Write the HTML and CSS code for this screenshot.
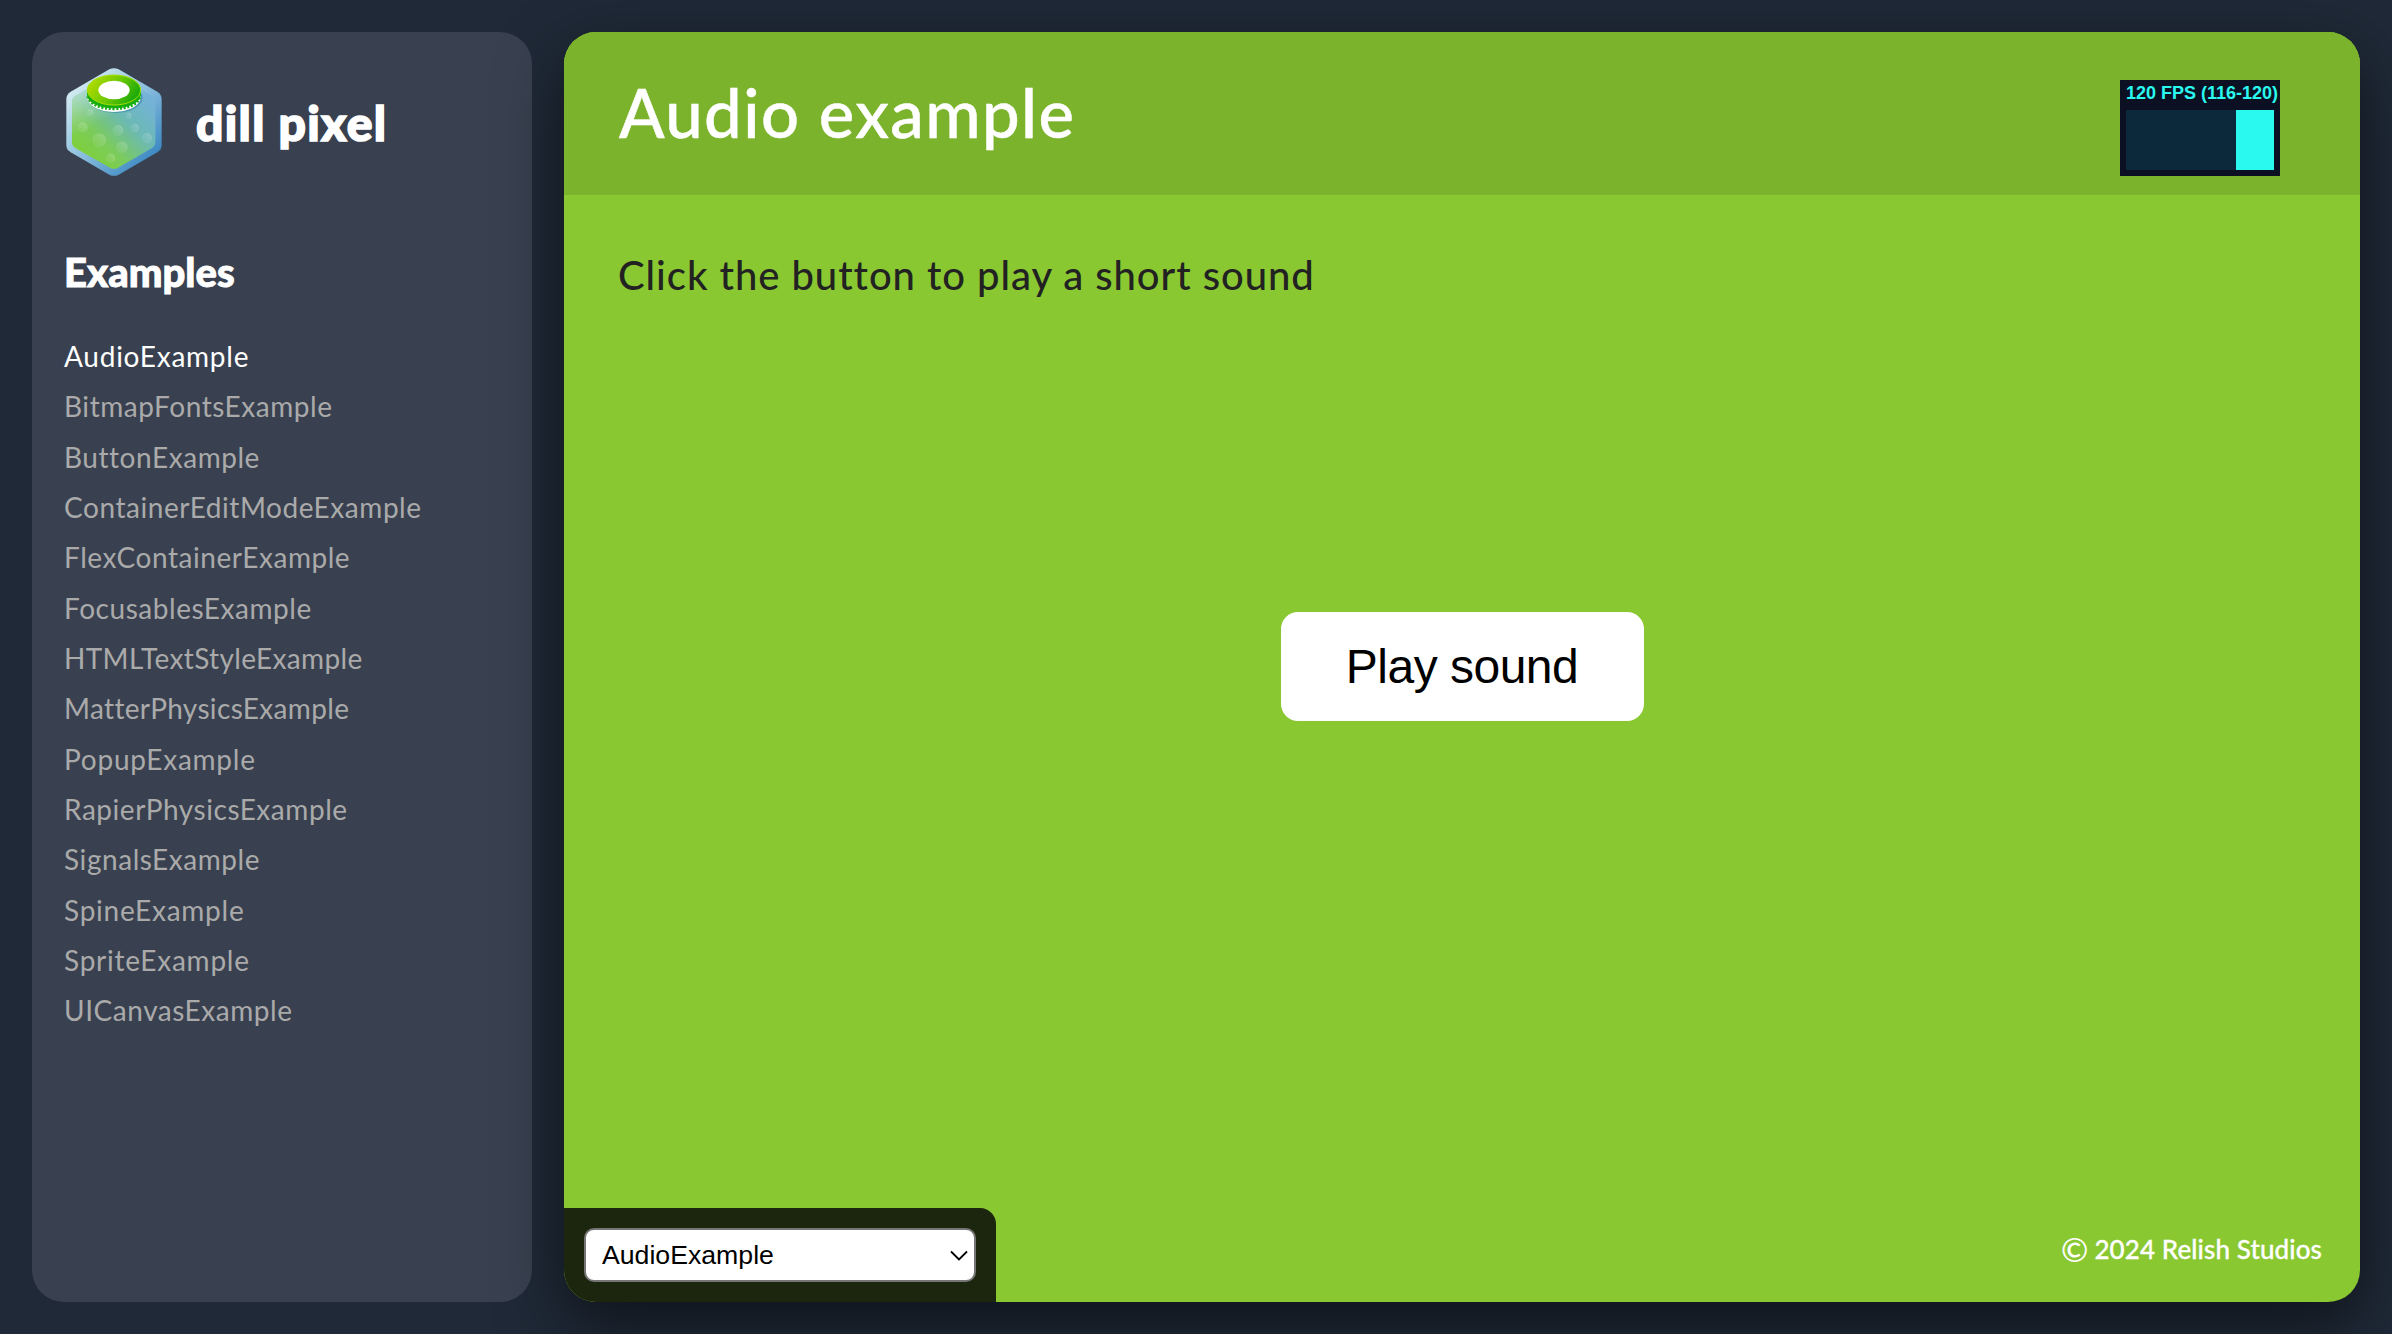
FILE: index.html
```html
<!DOCTYPE html>
<html lang="en">
<head>
<meta charset="utf-8">
<title>dill pixel</title>
<link rel="stylesheet" href="styles.css">
</head>
<body>
<aside class="sidebar">
  <div class="brand">
    <svg class="logo" viewBox="48 39 288 324" aria-hidden="true">
      <defs>
        <linearGradient id="glass" x1="0.1" y1="0.1" x2="0.85" y2="0.9"><stop offset="0" stop-color="#d8eef2"/><stop offset=".5" stop-color="#8dc0de"/><stop offset="1" stop-color="#3b88c3"/></linearGradient>
        <linearGradient id="brine" x1="0.15" y1="0.9" x2="0.8" y2="0.15"><stop offset="0" stop-color="#7fd037"/><stop offset=".3" stop-color="#7bcb5c"/><stop offset=".65" stop-color="#6cb9b4"/><stop offset="1" stop-color="#74b2d8"/></linearGradient>
        <linearGradient id="haze" x1="0.1" y1="0" x2="0.35" y2="0.5"><stop offset="0" stop-color="#d8eef2" stop-opacity=".9"/><stop offset="1" stop-color="#b7dfe0" stop-opacity="0"/></linearGradient>
        <linearGradient id="lid" x1="0" y1="0.3" x2="1" y2="0.7"><stop offset="0" stop-color="#b4dc00"/><stop offset=".5" stop-color="#6cc800"/><stop offset="1" stop-color="#0fa50c"/></linearGradient>
        <linearGradient id="bubble" x1="0" y1="1" x2="1" y2="0"><stop offset="0" stop-color="#fff" stop-opacity=".02"/><stop offset="1" stop-color="#fff" stop-opacity=".2"/></linearGradient>
      </defs>
      <path fill="url(#glass)" d="M178 43Q192 36 206 43L322 110Q335 118 335 132V270Q335 284 322 292L206 359Q192 366 178 359L62 292Q49 284 49 270V132Q49 118 62 110Z"/>
      <path fill="url(#brine)" d="M180 64Q192 57 204 64L305 122Q316 129 316 141V261Q316 273 305 280L204 338Q192 345 180 338L77 280Q66 273 66 261V141Q66 129 77 122Z"/>
      <path fill="url(#haze)" d="M180 64Q192 57 204 64L305 122Q316 129 316 141V261Q316 273 305 280L204 338Q192 345 180 338L77 280Q66 273 66 261V141Q66 129 77 122Z"/>
      <g fill="url(#bubble)" stroke="#fff" stroke-opacity=".12" stroke-width="2">
        <circle cx="121" cy="172" r="9"/><circle cx="236" cy="182" r="8"/><circle cx="98" cy="217" r="14"/><circle cx="204" cy="226" r="15"/><circle cx="255" cy="219" r="11"/><circle cx="148" cy="255" r="19"/><circle cx="291" cy="249" r="14"/><circle cx="216" cy="276" r="16"/><circle cx="182" cy="309" r="13"/>
      </g>
      <ellipse cx="196" cy="128" rx="82" ry="46" fill="#1c6f96" opacity=".4"/>
      <path fill="#fff" d="M111 106V124C111 151 147 171 192 171S273 151 273 124V106Z"/>
      <path fill="#18ad10" d="M111 106V118C111 143 147 160 192 160S273 143 273 118V106Z"/>
      <path fill="none" stroke="#18ad10" stroke-width="9" stroke-dasharray="6 5" d="M114 124C118 147 150 161 192 161S266 147 270 124"/>
      <ellipse cx="192" cy="105" rx="80" ry="45" fill="url(#lid)" stroke="#a5e000" stroke-width="3"/>
      <ellipse cx="192" cy="105" rx="47" ry="28" fill="#fff"/>
    </svg>
    <span class="brand-name">dill pixel</span>
  </div>
  <h2 class="nav-title">Examples</h2>
  <nav class="nav">
    <a class="active">AudioExample</a>
    <a>BitmapFontsExample</a>
    <a>ButtonExample</a>
    <a>ContainerEditModeExample</a>
    <a>FlexContainerExample</a>
    <a>FocusablesExample</a>
    <a class="tight">HTMLTextStyleExample</a>
    <a class="tight">MatterPhysicsExample</a>
    <a class="loose">PopupExample</a>
    <a>RapierPhysicsExample</a>
    <a>SignalsExample</a>
    <a class="loose">SpineExample</a>
    <a class="loose">SpriteExample</a>
    <a>UICanvasExample</a>
  </nav>
</aside>
<main class="stage">
  <header class="stage-header">
    <h1>Audio example</h1>
    <div class="fps"><span class="fps-text">120 FPS (116-120)</span><div class="fps-graph"><div class="fps-bar"></div></div></div>
  </header>
  <p class="intro">Click the button to play a short sound</p>
  <button class="play">Play sound</button>
  <footer class="stage-footer">
    <div class="picker">
      <div class="select"><span>AudioExample</span>
        <svg class="chevron" viewBox="0 0 18 11" aria-hidden="true"><path d="M1 1.5L9 9.5L17 1.5" fill="none" stroke="#000" stroke-width="1.8"/></svg>
      </div>
    </div>
    <div class="copyright"><span class="mark">©</span><span>2024 Relish Studios</span></div>
  </footer>
</main>
</body>
</html>
```

FILE: styles.css
```css
* { box-sizing: border-box; }
body {
  margin: 0;
  width: 2392px;
  height: 1334px;
  padding: 32px;
  display: flex;
  gap: 32px;
  overflow: hidden;
  background: #1f2937;
  color: #fff;
  font-family: Lato, "Liberation Sans", sans-serif;
}
.sidebar {
  width: 500px;
  padding: 36px 32px;
  border-radius: 32px;
  background: #394150;
}
.brand { display: flex; align-items: center; height: 108px; padding-left: 2px; }
.logo { width: 96px; height: 108px; margin-right: 34px; }
.brand-name {
  padding-top: 2px;
  font-size: 48px;
  font-weight: 900;
  line-height: 58px;
  letter-spacing: 1.35px;
  -webkit-text-stroke: 1.6px #fff;
}
.nav-title { margin: 72px 0 0; font-size: 40px; font-weight: 900; line-height: 48px; -webkit-text-stroke: 0.9px #fff; }
.nav { display: flex; flex-direction: column; align-items: flex-start; margin-top: 35px; }
.nav a { color: #aaa; font-size: 28px; line-height: 50.35px; letter-spacing: 0.55px; white-space: nowrap; }
.nav .active { color: #fff; letter-spacing: 0.75px; }
.nav .tight { letter-spacing: 0.35px; }
.nav .loose { letter-spacing: 0.75px; }
.stage {
  flex: 1;
  display: flex;
  flex-direction: column;
  overflow: hidden;
  border-radius: 32px;
  background: #8ac832;
  box-shadow: 0 24px 64px rgba(0, 0, 0, .52);
}
.stage-header {
  display: flex;
  justify-content: space-between;
  height: 163px;
  padding: 48px 80px 0 55px;
  background: #7cb32d;
}
h1 { margin: -8px 0 0; font-size: 67px; font-weight: 500; line-height: 80px; letter-spacing: 1.4px; -webkit-text-stroke: 0.5px #fff; }
.fps { width: 160px; height: 96px; padding: 3px 6px 6px; background: #0c1023; color: #29f9ee; }
.fps-text { display: block; width: max-content; height: 27px; font: bold 18px/20px "Liberation Sans", sans-serif; }
.fps-graph { display: flex; justify-content: flex-end; height: 60px; background: #0c293b; }
.fps-bar { width: 38px; background: #29f9ee; }
.intro { margin: 56px 54px 0; color: #222; font-size: 40px; font-weight: 500; line-height: 48px; letter-spacing: 0.95px; }
.play {
  width: 363px;
  height: 109px;
  margin: 313.3px 0 0 716.5px;
  padding: 0;
  border: 0;
  border-radius: 17px;
  background: #fff;
  color: #000;
  font: 48px "Liberation Sans", sans-serif;
  letter-spacing: -0.5px;
}
.stage-footer { display: flex; justify-content: space-between; margin-top: auto; }
.picker { width: 432px; height: 94px; padding: 20px; border-radius: 0 16px 0 0; background: #1c260e; }
.select {
  display: flex;
  align-items: center;
  justify-content: space-between;
  height: 54px;
  padding: 0 6px 0 16px;
  border: 2px solid #767676;
  border-radius: 10px;
  background: #fff;
  color: #000;
  font: 26.67px "Liberation Sans", sans-serif;
}
.chevron { width: 18px; height: 11px; }
.copyright {
  display: flex;
  align-items: center;
  gap: 6px;
  height: 34px;
  margin: 24px 38px 0 0;
  font-size: 26px;
  font-weight: 500;
  line-height: 34px;
  letter-spacing: 0.1px;
  -webkit-text-stroke: 0.3px #fff;
}
.mark { font-size: 33px; -webkit-text-stroke: 0; }
```
